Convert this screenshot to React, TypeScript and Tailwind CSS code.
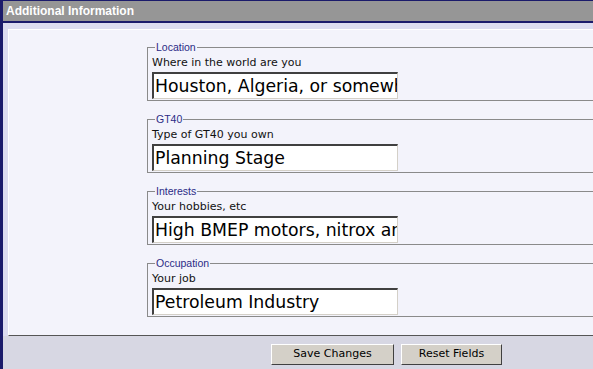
import React from "react";

const FIELDS = [
  { legend: "Location", label: "Where in the world are you", value: "Houston, Algeria, or somewhere else" },
  { legend: "GT40", label: "Type of GT40 you own", value: "Planning Stage" },
  { legend: "Interests", label: "Your hobbies, etc", value: "High BMEP motors, nitrox and more" },
  { legend: "Occupation", label: "Your job", value: "Petroleum Industry" },
];

const verdana = "font-['DejaVu_Sans',Verdana,sans-serif]";

export default function App() {
  return (
    <div className="w-[593px] h-[369px] overflow-hidden bg-[#d7d7e3] border-l-[3px] border-[#1b1b6b] flex flex-col">
      <div className="h-[23px] shrink-0 bg-[#969696] border-t border-b-2 border-[#1b1b6b] pl-[3px] flex items-center">
        <span className="text-white font-bold text-[12px] font-['Liberation_Sans',Arial,sans-serif] leading-none">
          Additional Information
        </span>
      </div>
      <div className="bg-[#dcdcf0] pt-[6px] pl-[5px]">
        <div className="bg-[#f3f3fb] border-t border-l border-white border-b border-b-[#555] h-[307px] pl-[138px] pt-[12px]">
          <div className="flex flex-col gap-[13px]">
            {FIELDS.map((f) => (
              <fieldset key={f.legend} className="border border-[#8a8a8a] w-[470px] h-[59px] px-[4px] pb-[3px] m-0 min-w-0">
                <legend className="text-[10.5px] leading-[10px] text-[#2b2b86] px-[1px] ml-[3px] font-['Liberation_Sans',Arial,sans-serif]">
                  {f.legend}
                </legend>
                <div className={`${verdana} text-[11px] leading-[13px] text-[#111] mt-[4px]`}>{f.label}</div>
                <input
                  readOnly
                  value={f.value}
                  className={`${verdana} mt-[3px] block w-[246px] h-[27px] bg-white text-[17.3px] text-black pl-[1px] pr-0 border-t-2 border-l-2 border-r border-b border-t-[#404040] border-l-[#404040] border-r-[#d4d0c8] border-b-[#d4d0c8] outline-none`}
                />
              </fieldset>
            ))}
          </div>
        </div>
      </div>
      <div className="flex gap-[7px] pl-[268px] pt-[8px]">
        <button className={`${verdana} w-[123px] h-[21px] bg-[#d4d0c8] text-[11px] text-black border border-t-white border-l-white border-r-[#404040] border-b-[#404040]`}>
          Save Changes
        </button>
        <button className={`${verdana} w-[101px] h-[21px] bg-[#d4d0c8] text-[11px] text-black border border-t-white border-l-white border-r-[#404040] border-b-[#404040]`}>
          Reset Fields
        </button>
      </div>
    </div>
  );
}
